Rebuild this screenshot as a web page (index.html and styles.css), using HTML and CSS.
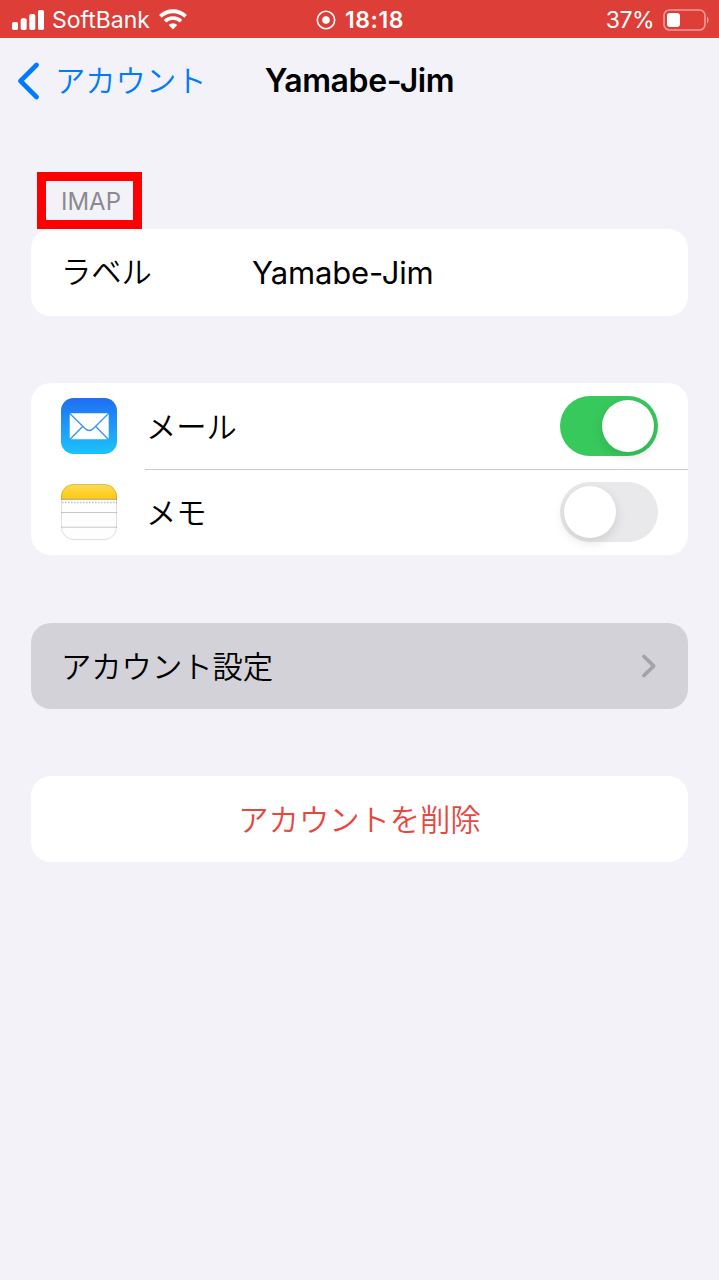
FILE: index.html
```
<!DOCTYPE html>
<html lang="ja">
<head>
    <meta charset="UTF-8">
    <meta name="viewport" content="width=device-width, initial-scale=1.0">
    <title>Yamabe-Jim</title>
    <link rel="stylesheet" href="styles.css">
</head>
<body>
    <header class="status-bar">
        <div class="status-left">
            <svg class="signal" width="32" height="20" viewBox="0 0 32 20" fill="#fff">
                <rect x="0" y="12" width="6" height="8" rx="1.8"/>
                <rect x="8.7" y="8.3" width="6" height="11.7" rx="1.8"/>
                <rect x="17.3" y="4" width="6" height="16" rx="1.8"/>
                <rect x="26" y="0" width="6" height="20" rx="1.8"/>
            </svg>
            <span class="carrier">SoftBank</span>
            <svg class="wifi" width="28" height="21" viewBox="0 0 28 21" fill="none" stroke="#fff">
                <path d="M1.4 7.4a18 18 0 0 1 25.2 0" stroke-width="3.8"/>
                <path d="M6 12.3a11.5 11.5 0 0 1 16 0" stroke-width="3.6"/>
                <path d="M14 20.6l-4.3-4.5a6.2 6.2 0 0 1 8.6 0z" fill="#fff" stroke="none"/>
            </svg>
        </div>
        <div class="status-center">
            <svg width="20" height="20" viewBox="0 0 20 20">
                <circle cx="10" cy="10" r="8.7" fill="none" stroke="#fff" stroke-width="1.6"/>
                <circle cx="10" cy="10" r="3.8" fill="#fff"/>
            </svg>
            <span class="clock">18:18</span>
        </div>
        <div class="status-right">
            <span class="percent">37%</span>
            <svg width="46" height="22" viewBox="0 0 46 22">
                <rect x="1" y="1" width="41" height="20" rx="5.5" fill="none" stroke="#f09c98" stroke-width="1.6"/>
                <rect x="4" y="4" width="13" height="14" rx="3" fill="#fff"/>
                <path d="M44 7.5c2 1 2 6 0 7z" fill="#f09c98"/>
            </svg>
        </div>
    </header>

    <nav class="nav-bar">
        <a class="back" href="#">
            <svg width="24" height="38" viewBox="0 0 24 38" fill="none" stroke="#007aff" stroke-width="4.6" stroke-linecap="round" stroke-linejoin="round">
                <path d="M21.500 3L5.500 19l16 16"/>
            </svg>
            <span class="kana">アカウント</span>
        </a>
        <h1>Yamabe-Jim</h1>
    </nav>

    <main>
        <h2 class="section-title">IMAP</h2>
        <section class="card">
            <div class="row">
                <span class="field-name kana">ラベル</span>
                <span class="field-value">Yamabe-Jim</span>
            </div>
        </section>

        <section class="card">
            <div class="row">
                <svg class="app-icon" width="56" height="56" viewBox="0 0 56 56">
                    <defs>
                        <linearGradient id="mail" x1="0" y1="0" x2="0" y2="1">
                            <stop offset="0" stop-color="#206df2"/>
                            <stop offset="1" stop-color="#1bc4fd"/>
                        </linearGradient>
                    </defs>
                    <rect width="56" height="56" rx="12.5" fill="url(#mail)"/>
                    <rect x="8.7" y="15.3" width="39" height="26" rx="1.8" fill="#fff"/>
                    <path d="M9.3 16L24 30.5q4.2 4 8.4 0L47 16M9.3 41l12.3-12.5M47 41L34.7 28.5" fill="none" stroke="#3495f5" stroke-width="1.3"/>
                </svg>
                <span class="app-name">メール</span>
                <span class="switch on"></span>
            </div>
            <div class="row">
                <svg class="app-icon" width="56" height="56" viewBox="0 0 56 56">
                    <defs>
                        <linearGradient id="memo" x1="0" y1="0" x2="0" y2="1">
                            <stop offset="0" stop-color="#fddb58"/>
                            <stop offset="1" stop-color="#fdc90f"/>
                        </linearGradient>
                        <clipPath id="tile"><rect width="56" height="56" rx="12.5"/></clipPath>
                    </defs>
                    <g clip-path="url(#tile)">
                        <rect width="56" height="56" fill="#fefefe"/>
                        <rect width="56" height="15" fill="url(#memo)"/>
                        <path d="M0 15.3h56" stroke="#a79f88"/>
                        <path d="M1 18.5h55" stroke="#c4c4c6" stroke-width="1.6" stroke-dasharray="1.6 1.4"/>
                        <path d="M0 28.5h56M0 43.2h56" stroke="#c8c8ca"/>
                    </g>
                    <rect x=".5" y=".5" width="55" height="55" rx="12" fill="none" stroke="#000" stroke-opacity=".12"/>
                </svg>
                <span class="app-name">メモ</span>
                <span class="switch"></span>
            </div>
        </section>

        <section class="card pressed">
            <div class="row">
                <span class="link-name">アカウント設定</span>
                <svg class="chevron" width="16" height="26" viewBox="0 0 16 26" fill="none" stroke="#a3a2a8" stroke-width="3.8" stroke-linecap="round" stroke-linejoin="round">
                    <path d="M3 3.5l9.7 9.5L3 22.5"/>
                </svg>
            </div>
        </section>

        <section class="card">
            <div class="row delete">アカウントを削除</div>
        </section>
    </main>
</body>
</html>
```
FILE: styles.css
```
* {
    box-sizing: border-box;
}
body {
    margin: 0;
    min-height: 100vh;
    background: #f3f2f9;
    color: #000;
    font-family: Inter, "Noto Sans CJK JP", sans-serif;
    font-size: 30.3px;
    font-weight: 350;
}
.status-bar {
    display: grid;
    grid-template-columns: 1fr auto 1fr;
    align-items: center;
    height: 38px;
    padding: 0 10px 0 12px;
    background: #dd3e37;
    color: #fff;
    font-size: 23px;
    font-weight: 400;
    line-height: 38px;
}
.status-left, .status-center, .status-right {
    display: flex;
    align-items: center;
}
.carrier {
    margin: 1px 9px 0 8px;
}
.status-center {
    gap: 9px;
    padding-right: 1px;
}
.clock {
    font-weight: 600;
    letter-spacing: 0.6px;
}
.status-right {
    justify-content: flex-end;
    gap: 9px;
}
.percent {
    letter-spacing: -0.5px;
}
.nav-bar {
    display: grid;
    grid-template-columns: 1fr auto 1fr;
    align-items: center;
    height: 86px;
    padding: 0 15px;
}
.back {
    display: flex;
    align-items: center;
    gap: 16px;
    color: #007aff;
    text-decoration: none;
}
.kana {
    padding-bottom: 5px;
}
h1 {
    margin: 0 0 1px;
    font-size: 32px;
    font-weight: 600;
    letter-spacing: -0.4px;
}
main {
    padding: 48px 31px;
}
.section-title {
    display: flex;
    align-items: center;
    justify-content: center;
    width: 105px;
    height: 57px;
    margin: 0 0 0.4px 6px;
    padding: 2px 0 0 3px;
    border: 9px solid #f00;
    color: #8a8a8f;
    font-size: 24px;
    font-weight: 400;
}
.card {
    margin-bottom: 67.3px;
    border-radius: 20px;
    background: #fff;
}
.row {
    display: flex;
    align-items: center;
    height: 86.2px;
    padding: 0 30px 3px 30px;
    padding-bottom: 0;
}
.row + .row {
    background: linear-gradient(#cbcbcd, #cbcbcd) right top / 543px 1px no-repeat;
}
.field-name {
    width: 191px;
}
.field-value {
    padding-top: 1px;
    font-size: 31px;
    font-weight: 400;
    letter-spacing: -0.15px;
}
.app-name {
    margin-left: 29px;
    padding-bottom: 2px;
}
.switch {
    width: 98px;
    height: 60px;
    margin-left: auto;
    padding: 4px;
    border-radius: 30px;
    background: #e9e8eb;
}
.switch::before {
    content: "";
    display: block;
    width: 52px;
    height: 52px;
    border-radius: 50%;
    background: #fff;
    box-shadow: 0 4px 12px rgba(0, 0, 0, 0.12);
}
.switch.on {
    background: #37c95c;
}
.switch.on::before {
    margin-left: auto;
}
.pressed {
    background: #d3d2d8;
}
.link-name {
    padding-bottom: 2px;
}
.chevron {
    margin: 0 1px 0 auto;
}
.delete {
    justify-content: center;
    padding-bottom: 2px;
    color: #e8473f;
}
```
